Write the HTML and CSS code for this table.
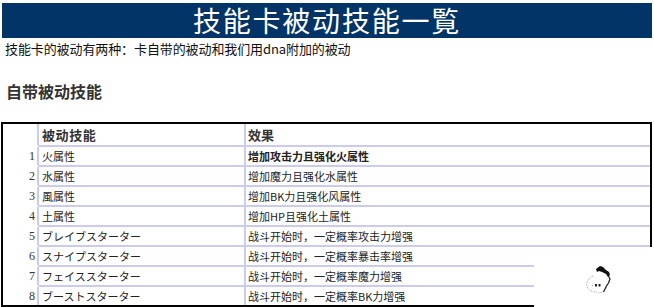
FILE: index.html
```html
<!DOCTYPE html>
<html lang="zh">
<head>
<meta charset="utf-8">
<title>技能卡被动技能一覧</title>
<link rel="stylesheet" href="styles.css">
</head>
<body>
<div class="page">
  <div class="titlebar">技能卡被动技能一覧</div>
  <p class="intro">技能卡的被动有两种：卡自带的被动和我们用dna附加的被动</p>
  <h2 class="heading">自带被动技能</h2>
  <table class="skills">
    <colgroup>
      <col class="c-idx">
      <col class="c-name">
      <col class="c-eff">
    </colgroup>
    <thead>
      <tr>
        <th class="idx"></th>
        <th class="name">被动技能</th>
        <th class="eff">效果</th>
      </tr>
    </thead>
    <tbody>
      <tr><td class="idx">1</td><td class="name">火属性</td><td class="eff strong">增加攻击力且强化火属性</td></tr>
      <tr><td class="idx">2</td><td class="name">水属性</td><td class="eff">增加魔力且强化水属性</td></tr>
      <tr><td class="idx">3</td><td class="name">風属性</td><td class="eff">增加BK力且强化风属性</td></tr>
      <tr><td class="idx">4</td><td class="name">土属性</td><td class="eff">增加HP且强化土属性</td></tr>
      <tr><td class="idx">5</td><td class="name">ブレイブスターター</td><td class="eff">战斗开始时，一定概率攻击力增强</td></tr>
      <tr><td class="idx">6</td><td class="name">スナイプスターター</td><td class="eff">战斗开始时，一定概率暴击率增强</td></tr>
      <tr><td class="idx">7</td><td class="name">フェイススターター</td><td class="eff">战斗开始时，一定概率魔力增强</td></tr>
      <tr class="last"><td class="idx">8</td><td class="name">ブーストスターター</td><td class="eff">战斗开始时，一定概率BK力增强</td></tr>
    </tbody>
  </table>
  <div class="cover">
    <svg class="mascot" width="32" height="32" viewBox="0 0 32 32">
      <path d="M9 12 C4 14 2 19 3 23 C5 27 9 28 13 28" fill="none" stroke="#aaa" stroke-width="1" stroke-dasharray="1.5 1.2"/>
      <path d="M12 5 L16 2 L19 3 L22 6 L25 8 L26 11 L24 13 L22 10 L18 8 L15 7 L13 8 Z" fill="#111"/>
      <path d="M24.5 12 L26 15 L24.5 19 L22.5 22 L21 25 L19.5 28" fill="none" stroke="#222" stroke-width="1.3"/>
      <rect x="11" y="20" width="2" height="2.5" fill="#222"/>
      <rect x="14.5" y="20" width="2" height="2.5" fill="#222"/>
      <rect x="8" y="21" width="1" height="1" fill="#999"/>
      <path d="M14 29 L19 28" stroke="#ccc" stroke-width="1"/>
    </svg>
  </div>
</div>
</body>
</html>
```

FILE: styles.css
```css
html, body {
  margin: 0;
  padding: 0;
  background: #ffffff;
}

.page {
  position: relative;
  width: 654px;
  height: 307px;
  overflow: hidden;
  font-family: "Noto Sans CJK SC", "Noto Sans", sans-serif;
  color: #111;
}

.titlebar {
  margin: 3px 2px 0 2px;
  height: 35px;
  background: #033467;
  color: #ffffff;
  text-align: center;
  font-family: "Noto Sans CJK JP", "Noto Sans CJK SC", sans-serif;
  font-size: 28px;
  line-height: 35px;
  font-weight: 400;
  letter-spacing: 1.8px;
}

.intro {
  margin: 2px 0 0 5px;
  font-size: 13px;
  line-height: 17px;
  color: #111;
  letter-spacing: -0.1px;
}

.heading {
  margin: 24px 0 0 6px;
  font-size: 16px;
  line-height: 20px;
  font-weight: 700;
  color: #333;
}

.skills {
  margin: 21px 0 0 1px;
  width: 651px;
  table-layout: fixed;
  border-collapse: separate;
  border-spacing: 0;
  border: 2px solid #000;
  font-size: 11px;
  color: #222;
}

.c-idx { width: 36px; }
.c-name { width: 207px; }
.c-eff { width: 404px; }

.skills th,
.skills td {
  padding: 0;
  height: 18px;
  line-height: 18px;
  white-space: nowrap;
  overflow: hidden;
  text-align: left;
  border-bottom: 2px solid #cbcbf0;
}

.skills th {
  height: 21px;
  line-height: 21px;
  font-size: 13px;
  font-weight: 700;
  color: #333;
}

.skills .idx {
  text-align: right;
  padding-right: 2px;
  border-right: 2px solid #cbcbf0;
  border-bottom-color: transparent;
  font-family: "Liberation Serif", serif;
  font-size: 12px;
  color: #333;
}

.skills .name {
  padding-left: 3px;
  border-right: 2px solid #cbcbf0;
}

.skills th.name {
  letter-spacing: 0.6px;
}

.skills .eff {
  padding-left: 2px;
}

.skills .strong {
  font-weight: 700;
}

.skills tr.last td {
  border-bottom: none;
}

.cover {
  position: absolute;
  left: 534px;
  top: 247px;
  width: 120px;
  height: 60px;
  background: #ffffff;
}

.mascot {
  position: absolute;
  left: 50px;
  top: 17px;
}
```
